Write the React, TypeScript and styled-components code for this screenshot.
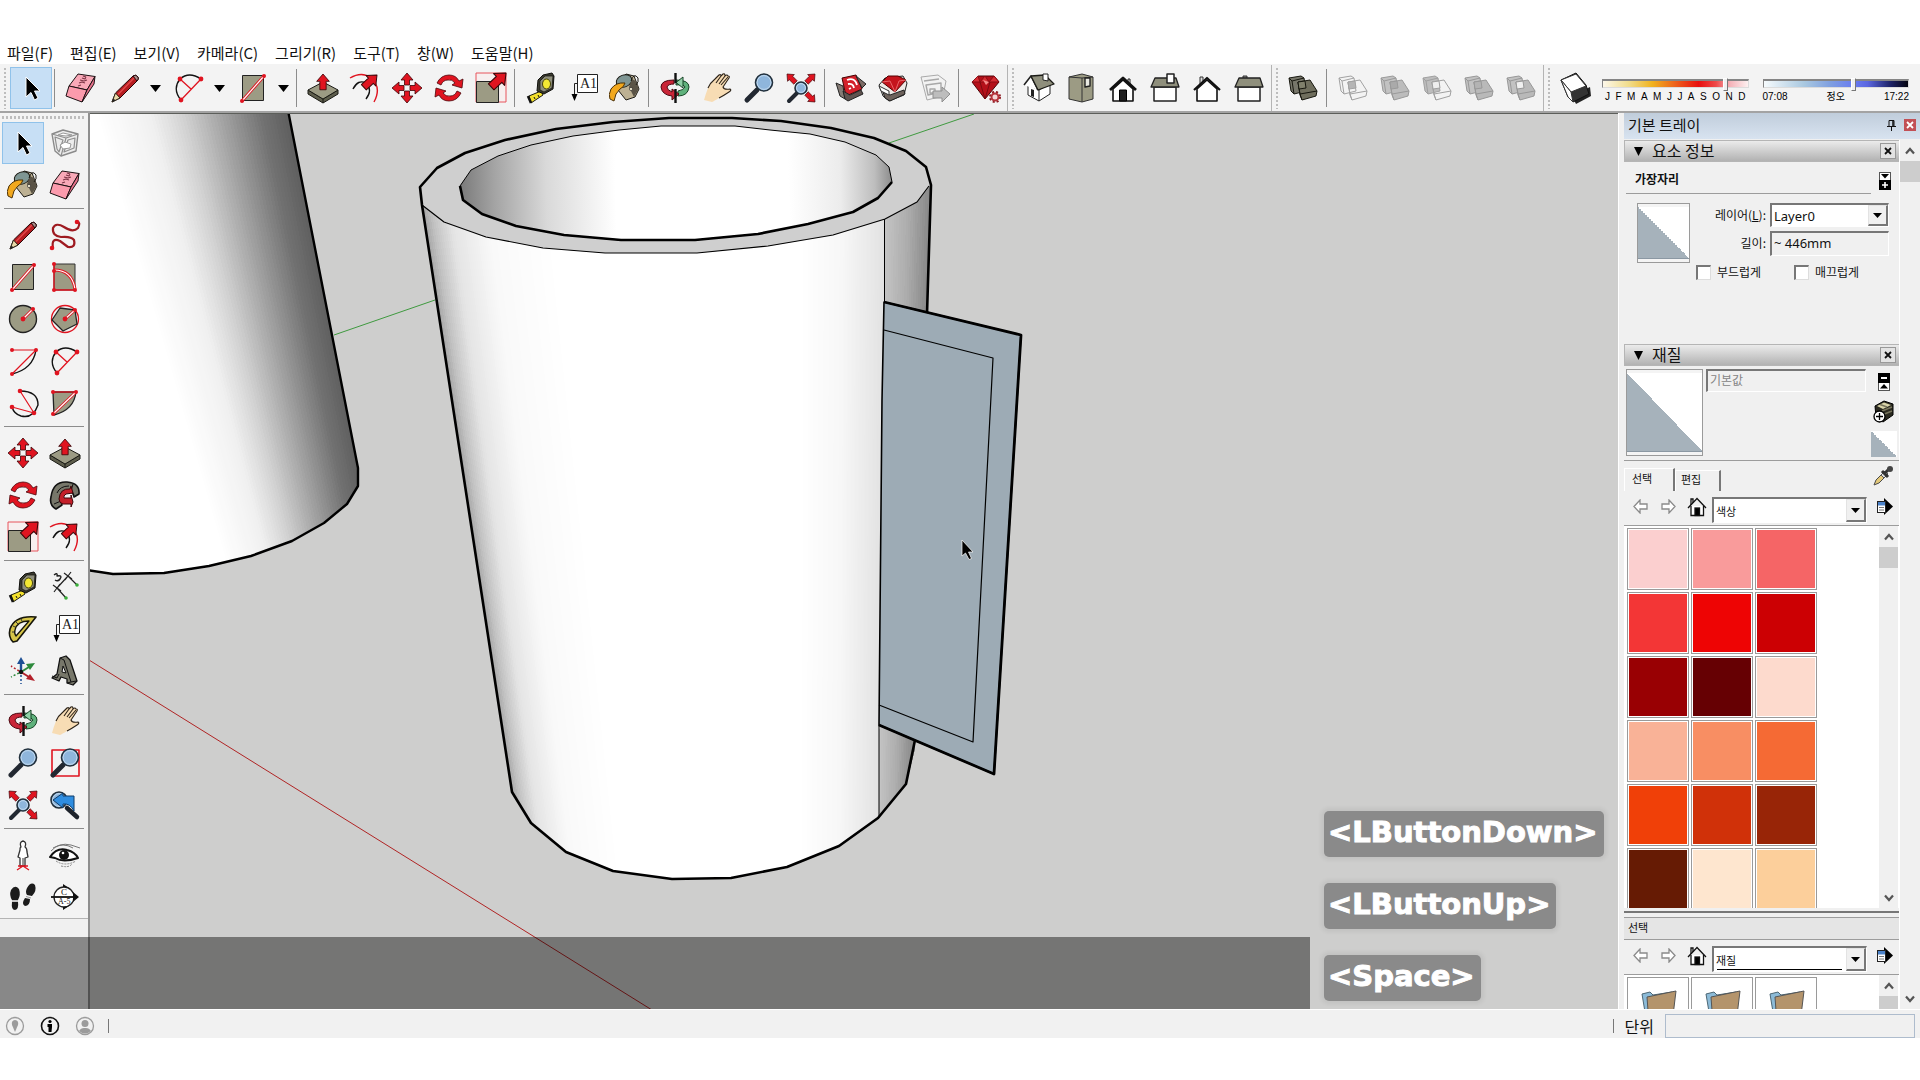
import React from 'react';
import styled, { createGlobalStyle } from 'styled-components';

const RED = '#e01420';
const TAUPE = '#9c9b84';
const KR = '"Noto Sans CJK KR", "Noto Sans", sans-serif';

const GlobalStyle = createGlobalStyle`
  * { box-sizing: border-box; }
  body { margin: 0; background: #fff; color: #111; font-family: "Liberation Sans", ${KR}; }
  button, input, select { font: inherit; color: inherit; margin: 0; }
`;

/* ---------- layout ---------- */
const Page = styled.div`
  position: relative;
  display: flex;
  flex-direction: column;
  height: 100vh;
  padding: 42px 0;
  background: #fff;
`;
const MenuBar = styled.nav`
  display: flex;
  align-items: center;
  gap: 17px;
  height: 22px;
  padding-left: 7px;
`;
const MenuItem = styled.button`
  border: 0;
  padding: 0;
  background: none;
  font: 15px/22px ${KR};
  white-space: nowrap;
`;
const ToolBar = styled.div`
  display: flex;
  height: 49px;
  padding-top: 1px;
  background: #f3f3f3;
  border-bottom: 2px solid #a3a3a3;
`;
const ToolGroup = styled.div`
  display: flex;
  align-items: center;
  padding-right: 1px;
  border-right: 1px solid #b4b4b4;
  &:last-child { flex: 1; border-right: 0; }
`;
const Grip = styled.span`
  width: 2px;
  height: 41px;
  margin: 0 4px;
  background: repeating-linear-gradient(#bdbdbd 0 2px, transparent 2px 4px);
`;
const ToolButton = styled.button<{ $active?: boolean }>`
  display: flex;
  align-items: center;
  justify-content: center;
  flex: none;
  width: 42px;
  height: 42px;
  padding: 0;
  border: 1px solid ${p => (p.$active ? '#90c2ea' : 'transparent')};
  background: ${p => (p.$active ? '#c7dff5' : 'none')};
`;
const DropTool = styled.div`
  display: flex;
  padding: 0 2px;
`;
const DropButton = styled.button`
  width: 18px;
  padding: 0;
  border: 0;
  background: none;
  line-height: 0;
`;
const VSep = styled.span`
  width: 1px;
  height: 38px;
  margin: 0 5px 0 2px;
  background: #8c8c8c;
`;
const HSep = styled.span`
  grid-column: 1 / -1;
  height: 1px;
  margin: 2px 2px 5px;
  background: #8c8c8c;
`;
const Body = styled.div`
  display: flex;
  flex: 1;
  min-height: 0;
`;
const Side = styled.aside`
  flex: none;
  width: 90px;
  background: #f0f0f0;
  border-right: 2px solid #8f8f8f;
`;
const SideTools = styled.div`
  display: grid;
  grid-template-columns: 42px 42px;
  padding: 0 2px;
  background: #f3f3f3;
  border-bottom: 1px solid #b4b4b4;
`;
const SideGrip = styled.span`
  grid-column: 1 / -1;
  height: 3px;
  margin: 3px 0;
  background: repeating-linear-gradient(90deg, #bdbdbd 0 2px, transparent 2px 4px);
`;
const Viewport = styled.main`
  position: relative;
  flex: 1;
  min-width: 0;
  border-top: 1px solid #5c5e5a;
  background: #cececd;
  overflow: hidden;
`;
const Scene = styled.svg`
  display: block;
  width: 100%;
  height: 100%;
`;
const KeyList = styled.div`
  position: absolute;
  right: 14px;
  bottom: 8px;
  width: 280px;
  display: flex;
  flex-direction: column;
  align-items: flex-start;
  gap: 26px;
`;
const Key = styled.kbd`
  padding: 0 6px 4px 4px;
  border-radius: 5px;
  background: #8a8a8a;
  box-shadow: 0 0 4px 3px rgba(0, 0, 0, 0.06);
  color: #fff;
  font: 700 29px/42px "DejaVu Sans", sans-serif;
  -webkit-text-stroke: 1px #fff;
`;
const Shade = styled.div`
  position: absolute;
  left: 0;
  right: 610px;
  bottom: 71px;
  height: 72px;
  background: rgba(0, 0, 0, 0.43);
`;

/* ---------- sun sliders ---------- */
const Sun = styled.div`
  display: flex;
  flex: 1;
  gap: 14px;
  padding: 0 10px 0 6px;
`;
const SunField = styled.label`
  flex: 1;
  display: flex;
  flex-direction: column;
  gap: 1px;
  padding-top: 3px;
`;
const Range = styled.input<{ $track: string }>`
  appearance: none;
  width: 100%;
  height: 13px;
  background: none;
  &::-webkit-slider-runnable-track {
    height: 9px;
    border: 1px solid #dcdcdc;
    border-top: 2px solid #858585;
    border-left-color: #858585;
    background: linear-gradient(90deg, ${p => p.$track});
  }
  &::-webkit-slider-thumb {
    appearance: none;
    width: 5px;
    height: 13px;
    margin-top: -3px;
    border: 1px solid #fff;
    border-right-color: #777;
    border-bottom-color: #777;
    background: #f0f0f0;
  }
`;
const Ticks = styled.span<{ $inset: number }>`
  display: flex;
  justify-content: space-between;
  padding: 0 ${p => p.$inset}px;
  font: 10px/12px "Liberation Sans", ${KR};
  color: #000;
`;

/* ---------- tray ---------- */
const Tray = styled.aside`
  flex: none;
  display: flex;
  flex-direction: column;
  width: 302px;
  padding-left: 5px;
  background: #f0f0f0;
  border-left: 1px solid #fff;
  font: 12px/16px ${KR};
`;
const TrayTitle = styled.header`
  display: flex;
  align-items: center;
  height: 26px;
  padding: 0 4px 2px;
  background: linear-gradient(#c0cddb, #d8e3f0);
  font-size: 15px;
  h2 { flex: 1; margin: 0; font: inherit; }
`;
const TitleButton = styled.button<{ $close?: boolean }>`
  display: flex;
  align-items: center;
  justify-content: center;
  width: 12px;
  height: 12px;
  margin-left: 7px;
  padding: 0;
  border: 0;
  background: ${p => (p.$close ? '#c25055' : 'none')};
`;
const TrayBody = styled.div`
  display: flex;
  flex: 1;
  min-height: 0;
  padding-top: 1px;
`;
const Panels = styled.div`
  flex: 1;
  min-width: 0;
  display: flex;
  flex-direction: column;
  border-right: 1px solid #fff;
`;
const ScrollBar = styled.div<{ $wide?: boolean }>`
  flex: none;
  display: flex;
  flex-direction: column;
  width: ${p => (p.$wide ? 20 : 19)}px;
  background: #f0f0f0;
  overflow: hidden;
`;
const ScrollButton = styled.button`
  flex: none;
  height: 21px;
  padding: 0;
  border: 0;
  background: none;
  line-height: 0;
  &:last-child { margin-top: auto; }
`;
const Thumb = styled.div`
  flex: none;
  height: 21px;
  background: #cdcdcd;
`;
const PanelHead = styled.header`
  flex: none;
  display: flex;
  align-items: center;
  gap: 9px;
  height: 22px;
  padding: 0 3px 0 9px;
  border: 1px solid #b5b5b5;
  border-width: 1px 0 1px 1px;
  background: linear-gradient(#ebebeb, #b2b2b2);
  font-size: 16px;
  line-height: 20px;
  h3 { flex: 1; margin: 0; padding-bottom: 2px; font: inherit; }
`;
const HeadClose = styled.button`
  display: flex;
  align-items: center;
  justify-content: center;
  width: 16px;
  height: 16px;
  padding: 0;
  border: 1px solid #999;
  background: #e3e3e3;
`;
const EntityInfo = styled.section`
  flex: none;
  height: 182px;
  padding: 7px 8px 0 2px;
`;
const EntityHead = styled.div`
  display: flex;
  justify-content: space-between;
  height: 24px;
  padding-left: 9px;
  font-weight: 700;
  line-height: 20px;
`;
const Rule = styled.hr<{ $right?: number }>`
  flex: none;
  width: auto;
  height: 1px;
  margin: 0 ${p => p.$right || 0}px 0 0;
  border: 0;
  background: #9c9c9c;
`;
const PlainButton = styled.button`
  display: block;
  padding: 0;
  border: 0;
  background: none;
  line-height: 0;
`;
const EntityGrid = styled.div`
  display: grid;
  grid-template-columns: 53px 80px 1fr;
  grid-template-rows: 24px 25px;
  row-gap: 4px;
  padding: 9px 2px 0 11px;
  > label { text-align: right; padding-right: 4px; line-height: 24px; }
`;
const Swatch = styled.div<{ $w: number; $h: number }>`
  grid-row: span 3;
  width: ${p => p.$w}px;
  height: ${p => p.$h}px;
  padding: 3px 0 4px;
  border: 1px solid #9a9a9a;
  background: #f4f4f4;
  &::before {
    content: '';
    display: block;
    height: 100%;
    background: linear-gradient(to top right, #a6b2bb 50%, #fff 50%);
    border-bottom: 1px solid #8b98a3;
  }
`;
const SelectBox = styled.div<{ $h: number }>`
  position: relative;
  height: ${p => p.$h}px;
  min-width: 0;
  border: 1px solid #fff;
  border-top: 2px solid #777;
  border-left: 2px solid #777;
  background: #fff;
  select {
    appearance: none;
    width: 100%;
    height: 100%;
    padding: 0 22px 0 2px;
    border: 0;
    background: none;
    outline: 0;
  }
`;
const SelectArrow = styled.span`
  position: absolute;
  right: 0;
  top: 0;
  bottom: 0;
  width: 20px;
  display: flex;
  align-items: center;
  justify-content: center;
  border: 1px solid #e3e3e3;
  border-right: 2px solid #777;
  border-bottom: 2px solid #777;
  background: #f0f0f0;
  pointer-events: none;
`;
const Underline = styled.span`
  position: absolute;
  left: 3px;
  right: 24px;
  bottom: 1px;
  height: 1px;
  background: #000;
`;
const LayerSelect = styled.div`
  min-width: 0;
  font: 13px/16px "Noto Sans", ${KR};
`;
const ReadOnly = styled.input<{ $dim?: boolean }>`
  width: 100%;
  min-width: 0;
  height: ${p => (p.$dim ? 23 : 25)}px;
  padding: 0 2px 2px;
  border: 1px solid #fff;
  border-top: 2px solid #777;
  border-left: 2px solid #777;
  background: #f0f0f0;
  color: ${p => (p.$dim ? '#858585' : '#111')};
  font: ${p => (p.$dim ? 12 : 13)}px/16px "Noto Sans", ${KR};
`;
const Checks = styled.div`
  display: flex;
  gap: 34px;
  padding: 1px 0 0 70px;
`;
const Check = styled.label`
  display: flex;
  align-items: center;
  gap: 6px;
  width: 64px;
  height: 16px;
  white-space: nowrap;
  input {
    appearance: none;
    flex: none;
    width: 15px;
    height: 15px;
    border: 1px solid #ddd;
    border-top: 2px solid #777;
    border-left: 2px solid #777;
    background: #fff;
  }
`;
const Material = styled.section`
  flex: none;
  display: flex;
  gap: 3px;
  height: 94px;
  padding: 3px 1px 0 2px;
`;
const MaterialName = styled.div`
  flex: 1;
  min-width: 0;
`;
const MaterialTools = styled.div`
  display: flex;
  flex-direction: column;
  align-items: center;
  justify-content: space-between;
  width: 29px;
  padding: 4px 0 3px;
`;
const MiniSwatch = styled.span`
  width: 26px;
  height: 26px;
  background: linear-gradient(to top right, #a6b2bb 50%, #fff 50%);
`;
const TabRow = styled.div`
  flex: none;
  display: flex;
  align-items: flex-end;
  height: 30px;
  padding-right: 5px;
`;
const Tab = styled.button<{ $on?: boolean }>`
  width: ${p => (p.$on ? 51 : 46)}px;
  height: ${p => (p.$on ? 23 : 21)}px;
  padding: 0 0 4px ${p => (p.$on ? 7 : 5)}px;
  border: 0;
  border-top: 1px solid #fff;
  border-left: 1px solid #fff;
  border-right: 2px solid #777;
  background: #f0f0f0;
  font-size: 11px;
  text-align: left;
`;
const TabTool = styled.div`
  margin: 0 0 4px auto;
`;
const NavRow = styled.div`
  flex: none;
  display: grid;
  grid-template-columns: 28px 28px 29px 1fr 27px;
  align-items: start;
  padding: 6px 5px 2px 2px;
  font-size: 11px;
  > div { margin-left: 1px; }
  > button { justify-self: center; display: flex; align-items: center; height: 19px; }
  > button:last-child { justify-self: end; }
`;
const List = styled.div<{ $grow?: boolean }>`
  flex: ${p => (p.$grow ? '1 1 0' : '0 0 34px')};
  display: flex;
  min-height: 0;
  padding-right: 1px;
  overflow: hidden;
  background: #fff;
`;
const Cells = styled.div`
  flex: 1;
  display: grid;
  grid-template-columns: repeat(3, 62px);
  grid-auto-rows: 62px;
  align-content: start;
  gap: 2px;
  padding: 2px 3px;
`;
const Colour = styled.button<{ $c: string }>`
  padding: 1px;
  border: 1px solid #9a9a9a;
  background: ${p => p.$c} content-box;
`;
const FolderCell = styled.button`
  display: flex;
  align-items: flex-start;
  padding: 12px 0 0 13px;
  border: 1px solid #9a9a9a;
  background: #fff;
`;
const SecondHead = styled.h4`
  flex: none;
  height: 32px;
  margin: 0;
  padding: 3px 0 0;
  border-bottom: 1px solid #9c9c9c;
  span {
    display: block;
    height: 28px;
    padding: 3px 4px 0;
    border-top: 2px solid #777;
    background: linear-gradient(#f0f0f0 0 4px, #9c9c9c 4px 5px, #e5e5e5 5px);
    font: 11px/22px ${KR};
  }
`;

/* ---------- status bar ---------- */
const Status = styled.footer`
  flex: none;
  display: flex;
  align-items: center;
  gap: 15px;
  height: 29px;
  padding: 3px 5px 0;
  border-top: 1px solid #fff;
  background: #f1f1f1;
`;
const StatusTick = styled.span`
  width: 1px;
  height: 14px;
  margin-left: -2px;
  background: #777;
`;
const Measure = styled.label`
  display: flex;
  align-items: center;
  gap: 11px;
  margin-left: auto;
  font: 16px/24px ${KR};
  input {
    width: 250px;
    height: 24px;
    border: 1px solid #aebccd;
    background: #f0f0f0;
  }
`;

/* ---------- icon primitives ---------- */
const Ico = ({ children, s = 32 }: { children: React.ReactNode; s?: number }) => (
  <svg width={s} height={s} viewBox="0 0 32 32" fill="none" strokeLinejoin="round">{children}</svg>
);
const Dot = ({ x, y, r = 2 }: { x: number; y: number; r?: number }) => <circle cx={x} cy={y} r={r} fill={RED} />;
const Arrow = ({ x, y, a, k = 1 }: { x: number; y: number; a: number; k?: number }) => (
  <path transform={`translate(${x} ${y}) rotate(${a}) scale(${k})`} d="M0 0L6 7H3V15H-3V7H-6Z" fill={RED} stroke="#3a0508" strokeWidth={0.8} />
);
const RedLine = ({ d }: { d: string }) => (
  <>
    <path d={d} stroke={RED} strokeWidth={3} />
    <path d={d} stroke="#fff" strokeWidth={1.2} />
  </>
);
const Lens = ({ x, y, r }: { x: number; y: number; r: number }) => (
  <>
    <circle cx={x} cy={y} r={r} fill="#8fb6dc" stroke="#22303c" strokeWidth={1.6} />
    <circle cx={x} cy={y} r={r - 1.6} stroke="#c7dcef" strokeWidth={0.9} />
  </>
);

const BoxPair = ({ front, back, line, cut }: { front: string; back: string; line: string; cut: string }) => (
  <Ico>
    <path d="M2 6L14 4L17 6L19 19L7 22L4 19Z" fill={back} stroke={line} />
    <path d="M2 6L5 9L17 6M5 9L7 22" stroke={line} />
    <path d="M11 10L23 8L30 19L29 24L15 28L13 23Z" fill={front} stroke={line} />
    <path d="M13 22L30 19M11 10L13 22L15 28" stroke={line} />
    <path d="M11 10L18 9L19 16L12 17Z" fill={cut} stroke={line} />
  </Ico>
);

const icons: Record<string, React.ReactNode> = {
  cursor: <Ico><path d="M11 5V25L16 20.500L19.500 28L23 26L19.500 19H25Z" fill="#000" stroke="#fff" /></Ico>,
  eraser: (
    <Ico>
      <path d="M13 2L30 4.500L22 18L4 14Z" fill="#f9a9b8" stroke="#1c1113" />
      <path d="M4 14L22 18L17 30L1 24Z" fill="#fb9bad" stroke="#1c1113" />
      <path d="M22 18L30 4.500L29 12L17 30Z" fill="#e6728b" stroke="#1c1113" />
      <path d="M18 4l3 1M17 6l3 1l1-2M15 8l4 1l3-1M14 11l3-1l3 1M13 14l3-1" stroke="#7c3546" strokeWidth={1.1} />
    </Ico>
  ),
  pencil: (
    <Ico>
      <path d="M3 30L6.500 21L24 4Q27 2 29 5Q30 7 28 9L11 26Z" fill="#b51c20" stroke="#250708" />
      <path d="M3 30L6.500 21L11 26Z" fill="#e8d9a8" stroke="#30281a" />
      <path d="M3 30L4.500 26.500L6.500 28.500Z" fill="#222" />
      <path d="M9 22.500L25 6" stroke="#e4494b" strokeWidth={1.4} />
      <path d="M24 4Q27 2 29 5Q30 7 28 9Z" fill="#a98f8c" stroke="#250708" />
    </Ico>
  ),
  arc2: (
    <Ico>
      <path d="M7 7Q16 -1 28 7M7 7Q-1 17 8 28" stroke="#111" strokeWidth={1.3} />
      <path d="M8 28L28 7M7 7L18 17" stroke={RED} strokeWidth={1.3} />
      <Dot x={7} y={7} r={2.4} /><Dot x={28} y={7} r={2.4} /><Dot x={8} y={28} r={2.4} />
    </Ico>
  ),
  rect: (
    <Ico>
      <path d="M5.500 3.500H26.500V28.500H5.500Z" fill={TAUPE} stroke="#222" />
      <RedLine d="M5 29L27 4" /><Dot x={5} y={29} /><Dot x={27} y={4} />
    </Ico>
  ),
  push: (
    <Ico>
      <path d="M1 18V22L16 31L31 22V18L16 27Z" fill="#5d5d4c" stroke="#1a1a14" />
      <path d="M1 18L16 10L31 18L16 27Z" fill={TAUPE} stroke="#1a1a14" />
      <path d="M16 27V31" stroke="#1a1a14" />
      <Arrow x={16} y={2} a={0} k={1.05} />
    </Ico>
  ),
  offset: (
    <Ico>
      <path d="M1 6Q13 -1 22 6Q33 15 25 30" stroke={RED} strokeWidth={1.4} />
      <path d="M4 17Q9 7 17 11Q24 18 17 27" stroke="#111" strokeWidth={1.4} />
      <Arrow x={28} y={3} a={47} k={1.2} />
    </Ico>
  ),
  move: (
    <Ico>
      {[0, 90, 180, 270].map(a => (
        <path key={a} transform={`rotate(${a} 16 16)`} d="M16 1L22 8H18.500V13H13.500V8H10Z" fill={RED} stroke="#3a0508" strokeWidth={0.8} />
      ))}
    </Ico>
  ),
  rotate: (
    <Ico>
      {[0, 180].map(a => (
        <path key={a} transform={`rotate(${a} 16 16)`} d="M4 11Q8 3 16 3Q23 3 26 9L30 7L29 16L19 13L22 11Q19 7 15 8Q10 8 8 13Z" fill={RED} stroke="#4a060a" strokeWidth={0.8} />
      ))}
    </Ico>
  ),
  scale: (
    <Ico>
      <path d="M1 1H31V30H1Z" stroke="#e8545c" fill="#f7efef" />
      <path d="M1.500 9.500H23.500V30.500H1.500Z" fill={TAUPE} stroke="#222" />
      <Arrow x={31} y={1} a={47} k={1.35} />
    </Ico>
  ),
  tape: (
    <Ico>
      <path d="M4 24L16 19L18 23L6 31Z" fill="#f3e02c" stroke="#1a1a10" />
      <path d="M3 24L6 31" stroke="#111" strokeWidth={2.6} />
      <path d="M13 8L18 3L27 1L29 4L28 17L19 22L12 19Z" fill="#3b3b30" stroke="#0f0f0b" />
      <path d="M15 9L20 4L28 4L27 16L19 20L15 18Z" fill="#8f8f7d" stroke="#0f0f0b" strokeWidth={0.7} />
      <ellipse cx={21.500} cy={12} rx={4} ry={5} fill="#f3e833" stroke="#46430c" />
      <path d="M9 25l1 2M13 23l1 2" stroke="#111" />
    </Ico>
  ),
  label: (
    <Ico>
      <path d="M10.500 2.500H30.500V20.500H10.500Z" fill="#fff" stroke="#222" />
      <path d="M10 11.500H7.500V24" stroke="#222" />
      <path d="M4.500 22H10.500L7.500 29Z" fill="#000" />
      <text x={13} y={16} fontFamily="Liberation Serif, serif" fontSize={14} fill="#222">A1</text>
    </Ico>
  ),
  bucket: (
    <Ico>
      <path d="M10 9L17 2L25 4L30 17L26 25L17 28L9 18Z" fill="#bdb193" stroke="#1c1a14" />
      <ellipse cx={15} cy={9} rx={8} ry={6} transform="rotate(-20 15 9)" fill="#7f9694" stroke="#1c1a14" />
      <path d="M23 7Q31 10 29 18L25 25L20 15Z" fill="#5a5346" />
      <path d="M22 9Q25 0 29 6Q30 10 27 13" stroke="#1c1a14" />
      <path d="M16 11Q7 10 2 17Q-1 23 1 27L5 29Q6 21 11 17Q15 15 16 11Z" fill="#f2a81d" stroke="#4d3207" />
      <circle cx={22} cy={17} r={1.600} fill="#f2ead2" stroke="#222" strokeWidth={0.6} />
    </Ico>
  ),
  orbit: (
    <Ico>
      <path d="M17 8Q30 8 30 15Q29 24 19 24V19Q25 18 26 15Q25 12 17 13Z" fill="#5fb27c" stroke="#174526" />
      <path d="M15 8Q2 8 2 15Q3 23 13 24V28L20 22L13 17V20Q8 18 8 15Q9 12 15 12Z" fill="#c92638" stroke="#4c0710" />
      <path d="M24 5L17 10.500L24 16Z" fill="#8fd0a6" stroke="#174526" />
      <path d="M16.500 1V11M16.500 17V31" stroke="#111" strokeWidth={2.400} />
    </Ico>
  ),
  hand: (
    <Ico>
      <path d="M3 28Q5 21 7 16Q9 11 14 7L18 3Q20 2 20 4L22 2Q24 1 24 4Q26 2 27 4Q29 4 28 6L22 15Q23 18 29 17Q31 18 28 20Q22 24 18 26Q13 29 11 30Z" fill="#f7dcb4" />
      <path d="M7 16Q9 11 14 7L18 3Q20 2 20 4L22 2Q24 1 24 4Q26 2 27 4Q29 4 28 6L22 15Q23 18 29 17Q31 18 28 20Q22 24 18 26M20 4L15 11M24 4L18 12M27 5L20 13" stroke="#2c2319" strokeWidth={1.1} />
    </Ico>
  ),
  zoom: <Ico><path d="M4 28L14 18" stroke="#222831" strokeWidth={5} strokeLinecap="round" /><Lens x={21} y={10.500} r={8.500} /></Ico>,
  zoomWin: <Ico><path d="M3 3H30V29H3Z" stroke={RED} strokeWidth={1.600} /><path d="M4 28L14 18" stroke="#222831" strokeWidth={5} strokeLinecap="round" /><Lens x={21} y={10.500} r={8.500} /></Ico>,
  extents: (
    <Ico>
      <path d="M4 29L12 21" stroke="#222831" strokeWidth={4} strokeLinecap="round" />
      <Arrow x={2} y={2} a={-45} k={0.8} /><Arrow x={30} y={2} a={45} k={0.8} /><Arrow x={30} y={30} a={135} k={0.8} />
      <Lens x={16} y={16} r={6} />
    </Ico>
  ),
  previous: (
    <Ico>
      <Lens x={10} y={11} r={8} />
      <path d="M18 19L28 28" stroke="#1d232b" strokeWidth={4.500} strokeLinecap="round" />
      <path d="M4 11L14 4V7H25V22Q21 14 14 15V19Z" fill="#2f8de0" stroke="#103c68" />
    </Ico>
  ),
  warehouse: (
    <Ico>
      <path d="M1 11L8 14L10 27L5 24Z" fill="#857b75" stroke="#222" />
      <path d="M7 6L21 3L27 17L11 24Z" fill="#d3202a" stroke="#400" />
      <path d="M12 8Q20 5 22 13M13 12Q18 11 19 16M14 17l2-1" stroke="#fff" strokeWidth={1.800} />
      <path d="M21 4L26 8L31 12L27 16Z" fill="#7c6a64" stroke="#222" />
      <path d="M8 19L15 23L26 18L28 22L13 29L10 27Z" fill="#5f534f" stroke="#222" />
    </Ico>
  ),
  extWarehouse: (
    <Ico>
      <path d="M2 13L8 6L26 4L30 11L27 23L12 29L6 24Z" fill="#eeeae7" stroke="#222" />
      <path d="M5 10L11 4H21L29 8L18 20Z" fill="#c5141d" stroke="#500" />
      <path d="M5 10L13 9L18 20L22 9L29 8" stroke="#e86468" />
      <path d="M6 20L13 23L27 18L28 22L13 29L8 26Z" fill="#6d625c" stroke="#222" />
      <path d="M2 14L12 19V23L4 19Z" fill="#fff" stroke="#333" />
    </Ico>
  ),
  layout: (
    <Ico>
      <path d="M2 5L19 3L27 9L24 24L8 28Z" fill="#f2f2f2" stroke="#aaa" />
      <path d="M5 9L20 7M7 13L22 11V20L9 23Z M11 17h5v4h-5z" stroke="#a8a8a8" strokeWidth={1.400} />
      <path d="M14 19H23V15L31 22L23 30V26H14Z" fill="#bdbdbd" stroke="#8f8f8f" />
    </Ico>
  ),
  ruby: (
    <Ico>
      <path d="M3 10L9 4H25L30 10L16 27Z" fill="#b5101a" stroke="#4d0509" />
      <path d="M3 10H30L25 4L20 10L16 4L11 10L9 4" fill="#d62d34" stroke="#8b0b12" />
      <path d="M14 8L20 10L17 13Z" fill="#f58c8c" />
      <path d="M11 10L16 27L21 10" stroke="#7b0a10" />
      <circle cx={26} cy={25} r={5} stroke="#8f1a21" strokeWidth={2} strokeDasharray="2 2" />
      <circle cx={26} cy={25} r={3.500} stroke="#b5333b" strokeWidth={2} fill="#f3d6d6" />
    </Ico>
  ),
  iso: (
    <Ico>
      <path d="M5 13L5 23L16 29L27 22L27 12L16 18Z" fill="#fff" stroke="#222" />
      <path d="M16 18V29" stroke="#222" /><path d="M1 13L8 4L15 18" stroke="#222" strokeWidth={1.600} fill="#fff" />
      <path d="M8 4L22 3L31 12L15 18Z" fill="#8f8f7c" stroke="#1b1b16" strokeWidth={1.300} />
      <path d="M20 2H25V9L20 8Z" fill="#fff" stroke="#222" /><path d="M8 17L11 18V25L8 24Z" fill="#222" />
    </Ico>
  ),
  top: (
    <Ico>
      <path d="M4 5L17 2L28 5V27L17 30L4 27Z" fill={TAUPE} stroke="#333" /><path d="M17 6V30M4 5L17 6L28 5" stroke="#333" />
      <path d="M20 6H25V14L20 15Z" fill="#e9e9e2" stroke="#222" strokeWidth={1.400} />
    </Ico>
  ),
  front: <Ico><path d="M6 17V29H26V17L16 8Z" fill="#fff" stroke="#111" strokeWidth={1.600} /><path d="M21 11V7H23V12" stroke="#222" /><path d="M3 18L16 6L29 18" stroke="#111" strokeWidth={2.800} /><path d="M12.500 18H19.500V29H12.500Z" fill="#222" stroke="#000" /></Ico>,
  right: <Ico><path d="M5 15H27V29H5Z" fill="#fff" stroke="#222" strokeWidth={1.500} /><path d="M6 6H27L30 15H2Z" fill="#8f8f7c" stroke="#222" strokeWidth={1.300} /><path d="M18 2H25V11H18Z" fill="#fff" stroke="#222" strokeWidth={1.500} /></Ico>,
  back: <Ico><path d="M6 17V29H26V17L16 8Z" fill="#fff" stroke="#111" strokeWidth={1.600} /><path d="M9 12V5H12V9" stroke="#333" fill="#ddd" /><path d="M3 18L16 6L29 18" stroke="#111" strokeWidth={2.200} /></Ico>,
  left: <Ico><path d="M5 15H27V29H5Z" fill="#fff" stroke="#222" strokeWidth={1.500} /><path d="M10 6V4H14V6" stroke="#333" fill="#888" /><path d="M6 6H27L30 15H2Z" fill="#8f8f7c" stroke="#222" strokeWidth={1.300} /></Ico>,
  shell: <BoxPair front="#6f6e5d" back="#77766a" line="#17170f" cut="#80806c" />,
  intersect: <BoxPair front="none" back="none" line="#a2a2a2" cut="#b5b5b5" />,
  union: <BoxPair front="#bcbcbc" back="#c2c2c2" line="#9a9a9a" cut="#aaa" />,
  subtract: <BoxPair front="none" back="#bdbdbd" line="#a0a0a0" cut="#eee" />,
  trim: <BoxPair front="#b9b9b9" back="#c2c2c2" line="#989898" cut="#b3b3b3" />,
  split: <BoxPair front="#b9b9b9" back="#c2c2c2" line="#989898" cut="#f0f0f0" />,
  shadow: <Ico><path d="M13 24L31 15L32 24L17 32Z" fill="#222" /><path d="M2 8L17 1L27 13L30 22L14 30L9 25Z" fill="#333" stroke="#111" /><path d="M2 8L17 2L27 14L12 20Z" fill="#fff" stroke="#333" /><path d="M2 8L9 25L14 30L12 20Z" fill="#fff" stroke="#333" /></Ico>,
  component: (
    <Ico>
      <path d="M3 7L14 3L29 7L27 24L12 29L6 24Z" fill="#ececec" stroke="#8a8a8a" strokeWidth={1.400} />
      <path d="M3 7L17 11L29 7M17 11L12 29M6 10L14 13L10 25L8 22Z M19 13L26 11L25 21L15 25Z" stroke="#8f8f8f" strokeWidth={1.200} />
      <path d="M9 8L14 6L23 8L17 9ZM11 18L16 15L22 17L21 21L14 22Z" stroke="#999" fill="#fff" />
    </Ico>
  ),
  freehand: <Ico><path d="M4 29Q2 18 11 22L19 28Q27 29 25 21Q22 17 12 18Q3 17 4 9Q7 3 15 8Q24 14 29 9Q32 3 28 3" stroke="#9e1a20" strokeWidth={2.200} /><Dot x={3} y={29} r={2.300} /><Dot x={28} y={3} r={2.300} /></Ico>,
  rotRect: <Ico><path d="M5 3H26V29H5Z" fill={TAUPE} stroke="#333" /><RedLine d="M5 9Q23 9 26 28" /><path d="M5 3V29H26" stroke={RED} strokeWidth={1.400} /><Dot x={5} y={3} /><Dot x={5} y={10} /><Dot x={5} y={29} /><Dot x={26} y={29} /></Ico>,
  circle: <Ico><circle cx={16} cy={16} r={13.500} fill={TAUPE} stroke="#222" strokeWidth={1.400} /><RedLine d="M16 16L26 6" /><Dot x={16} y={16} r={2.400} /><Dot x={26} y={6} /></Ico>,
  polygon: <Ico><circle cx={16} cy={16} r={13.500} stroke={RED} strokeWidth={1.300} /><path d="M26 7L28 21L14 28L3 17L11 5Z" fill={TAUPE} stroke="#222" strokeWidth={1.300} /><RedLine d="M16 16L26 7" /><Dot x={16} y={16} r={2.400} /><Dot x={26} y={7} /></Ico>,
  arc1: <Ico><path d="M29 5Q26 24 5 29" stroke="#111" strokeWidth={1.400} /><path d="M5 5H29L5 29" stroke={RED} strokeWidth={1.200} /><Dot x={5} y={5} /><Dot x={29} y={5} /><Dot x={5} y={29} /></Ico>,
  arc3: <Ico><path d="M13 4Q31 4 31 18Q26 32 14 29Q7 27 5 20" stroke="#111" strokeWidth={1.400} /><path d="M13 4L27 26L5 20" stroke={RED} strokeWidth={1.200} /><Dot x={13} y={4} r={2.300} /><Dot x={27} y={26} r={2.300} /><Dot x={5} y={20} r={2.300} /></Ico>,
  pie: <Ico><path d="M4 5H27Q25 23 5 28Z" fill={TAUPE} stroke="#222" strokeWidth={1.300} /><path d="M4 5H27" stroke={RED} strokeWidth={1.300} /><RedLine d="M4 27L27 5" /><Dot x={4} y={5} /><Dot x={27} y={5} /><Dot x={4} y={27} /></Ico>,
  follow: <Ico><path d="M2 18Q4 2 18 3Q31 4 30 15L25 18Q24 11 17 12Q10 16 13 26L7 30Q0 26 2 18Z" fill="#77776a" stroke="#111" strokeWidth={1.600} /><path d="M8 14Q11 7 20 7M5 25L12 22M24 5L22 12" stroke="#111" /><path d="M10 20Q11 9 21 10L22 7L24 14L17 15Q14 17 15 19H22V16L24 23L22 28V25H14Q10 24 10 20Z" fill="#c41f29" stroke="#3e070a" /></Ico>,
  dimension: (
    <Ico>
      <path d="M8 17L19 5M8 17L17 27M19 5L28 14M4 14L12 20M5 21L11 13M15 2L23 8M16 9L22 1" stroke="#222" strokeWidth={1.200} />
      <path d="M5 4Q9 1 8 5Q14 4 11 8Q9 11 6 9" stroke="#222" strokeWidth={1.400} />
      <circle cx={17} cy={27} r={1.800} fill="#3aae3a" /><circle cx={28} cy={14} r={1.800} fill="#3aae3a" />
    </Ico>
  ),
  protractor: <Ico><path d="M29 4Q8 2 3 16Q1 24 6 29L10 28Z" fill="#d6c548" stroke="#16150a" strokeWidth={1.600} /><path d="M22 8Q10 8 8 17Q7 21 9 23Z" fill="#f3f3f3" stroke="#16150a" strokeWidth={1.300} /><path d="M6 13l2 1M9 9l2 2M14 6l1 2M5 19h2" stroke="#333" /></Ico>,
  axes: (
    <Ico>
      <path d="M14 18V8" stroke="#1d4f95" strokeWidth={2.400} /><path d="M10 9L14 2L18 9Z" fill="#1d4f95" />
      <path d="M14 17L22 12" stroke="#2d8a3c" strokeWidth={2} /><path d="M19 9L28 8L23 15Z" fill="#2d8a3c" />
      <path d="M14 17L22 22" stroke="#b3202a" strokeWidth={2} /><path d="M19 24L23 19L28 26Z" fill="#b3202a" />
      <path d="M14 20V29" stroke="#1d4f95" strokeDasharray="2 2" strokeWidth={1.500} /><path d="M12 18L4 22" stroke="#2d8a3c" strokeDasharray="2 2" strokeWidth={1.500} /><path d="M12 16L4 11" stroke="#b3202a" strokeDasharray="2 2" strokeWidth={1.500} />
      <circle cx={14} cy={17} r={2.200} fill="#111" />
    </Ico>
  ),
  text3d: <Ico><path d="M11 3L17 1L21 5L28 26L24 30L18 28V24L12 22L10 26L3 23L8 19Z" fill="#77776a" stroke="#111" strokeWidth={1.300} /><path d="M13 17L14 11L17 18Z" fill="#f3f3f3" stroke="#111" /><path d="M11 3L15 5L22 27L27 26M22 27L18 28M3 21L8 23L10 19" stroke="#111" /></Ico>,
  position: <Ico><path d="M13 11Q13 8 14 8Q12 3 16 2Q20 3 18 8Q20 9 20 13L21 18L18 19V27H13V19L11 18Z" fill="#fff" stroke="#333" strokeWidth={1.300} /><path d="M16 19V26" stroke="#333" /><path d="M10 31L16 27L22 31M11 27H21" stroke={RED} strokeWidth={1.300} /></Ico>,
  look: <Ico><path d="M2 12Q10 3 22 6L31 9M4 9Q14 3 24 9" stroke="#777" /><path d="M1 18Q8 8 18 11Q26 13 29 19Q14 24 6 19Z" fill="#fff" stroke="#111" strokeWidth={2} /><circle cx={15} cy={16} r={5} fill="#111" /><circle cx={14} cy={14} r={1.300} fill="#fff" /><path d="M7 22Q16 28 27 22M12 27Q20 29 23 25" stroke="#888" strokeDasharray="2 1" /></Ico>,
  walk: <Ico><path d="M4 9Q8 3 12 8Q14 14 11 19L5 19Q2 14 4 9ZM5 21L11 21Q12 28 8 29Q4 29 5 21ZM20 7Q24 0 28 4Q30 10 25 15L20 14Q18 11 20 7ZM18 17L23 18Q23 25 18 25Q14 23 18 17Z" fill="#1c1c1c" /><path d="M5 20H11M19 15.500L24 17" stroke="#999" /></Ico>,
  section: <Ico><circle cx={15} cy={16} r={10} stroke="#222" strokeWidth={1.300} fill="#fff" /><path d="M2 16H27" stroke="#111" strokeWidth={1.800} /><path d="M24 11L30 16L24 21ZM14 3L23 9Q19 6 14 6ZM14 29L23 23Q19 26 14 26Z" fill="#111" /><text x={12} y={14} fontSize={9} fontFamily="Liberation Serif, serif" fill="#111">C</text><text x={9} y={23} fontSize={8} fontFamily="Liberation Serif, serif" fill="#111">A-5</text></Ico>,
};

const Tool = ({ name, label, active }: { name: string; label: string; active?: boolean }) => (
  <ToolButton $active={active} aria-label={label} aria-pressed={active}>{icons[name]}</ToolButton>
);
const Triangle = ({ w = 10, h = 6 }: { w?: number; h?: number }) => (
  <svg width={w} height={h} viewBox="0 0 10 6" preserveAspectRatio="none"><path d="M0 0H10L5 6Z" fill="#000" /></svg>
);
const WithMenu = ({ name, label }: { name: string; label: string }) => (
  <DropTool><Tool name={name} label={label} /><DropButton aria-label={`${label} 메뉴`}><Triangle w={11} h={7} /></DropButton></DropTool>
);
const Chevron = ({ down }: { down?: boolean }) => (
  <svg width={10} height={8} viewBox="0 0 10 8" fill="none"><path d={down ? 'M1 1.500L5 6L9 1.500' : 'M1 6.500L5 2L9 6.500'} stroke="#555" strokeWidth={2.200} /></svg>
);
const Cross = ({ c = '#111' }: { c?: string }) => (
  <svg width={8} height={8} viewBox="0 0 8 8"><path d="M1 1L7 7M7 1L1 7" stroke={c} strokeWidth={1.800} /></svg>
);

/* ---------- 3D scene ---------- */
type Stop = [number, number];
const grey = (stops: Stop[], t: number) => {
  const i = Math.max(1, stops.findIndex(s => s[0] >= t));
  const [a, b] = [stops[i - 1], stops[i]];
  const v = Math.round(a[1] + ((b[1] - a[1]) * (t - a[0])) / (b[0] - a[0]));
  return `rgb(${v},${v},${v})`;
};
/* Vertical facets that narrow from the top edge to the bottom edge. */
const Facets = ({ top, bottom, stops, n = 64 }: { top: number[]; bottom: number[]; stops: Stop[]; n?: number }) => (
  <g shapeRendering="crispEdges">
    {Array.from({ length: n }, (_, i) => {
      const at = (e: number[], t: number) => `${e[0] + (e[1] - e[0]) * t},${e[2]}`;
      return <polygon key={i} points={`${at(top, i / n)} ${at(top, 1)} ${at(bottom, 1)} ${at(bottom, i / n)}`} fill={grey(stops, (i + 0.5) / n)} />;
    })}
  </g>
);
const MUG = 'M420 187L422 205L512 792L531 823L566 852L613 871L672 879L731 878L787 867L839 846L878 818L906 784L915 748L927 306L931 185L928 186L917 202L885 219L833 235L768 246L697 253H605L543 248L486 237L444 222L422 205Z';
const LEFT_MUG = 'M80 100H286L358 468V486L347 504L324 523L292 541L251 556L209 566L164 573L113 574L80 569Z';
const INNER = 'M460 186L471 170L498 156L531 145L573 136L619 130L661 126H735L770 130L810 134L845 142L876 155L889 167L892 182L878 198L853 212L808 224L758 234L695 240H621L564 235L516 226L482 214L463 200Z';
const RIM = 'M420 187L437 168L465 153L505 140L556 129L613 122L669 118H732L781 121L831 128L874 138L906 151L926 167L931 185L917 202L885 219L833 235L768 246L697 253H605L543 248L486 237L444 222L422 205Z';

const Model = () => (
  <Scene role="img" aria-label="3D 모델">
    <defs>
      <clipPath id="mug"><path d={MUG} /></clipPath>
      <clipPath id="leftMug"><path d={LEFT_MUG} /></clipPath>
      <linearGradient id="inner" gradientUnits="userSpaceOnUse" x1="460" y1="190" x2="892" y2="180">
        <stop offset="0" stopColor="#7a7a7a" /><stop offset=".08" stopColor="#a4a4a4" /><stop offset=".2" stopColor="#d9d9d9" /><stop offset=".36" stopColor="#fff" />
        <stop offset=".76" stopColor="#fff" /><stop offset=".88" stopColor="#ececec" /><stop offset=".96" stopColor="#bdbdbd" /><stop offset="1" stopColor="#8c8c8c" />
      </linearGradient>
    </defs>
    <g transform="translate(-90 -114)" fill="none" stroke="#000" strokeLinejoin="round">
      <path d="M334 335L435 300M889 143L974 114" stroke="#3f9a3f" />
      <path d="M89 660L652 1010" stroke="#b02424" />
      <g clipPath="url(#leftMug)" stroke="none">
        <rect x="80" y="100" width="300" height="500" fill="#fff" />
        <Facets top={[95, 293, 114]} bottom={[228, 384, 575]} stops={[[0, 255], [0.28, 240], [0.45, 208], [0.65, 160], [0.85, 112], [1, 92]]} />
      </g>
      <path d={LEFT_MUG} strokeWidth={2.400} />
      <g clipPath="url(#mug)" stroke="none">
        <rect x="400" y="180" width="540" height="710" fill="#fff" />
        <Facets top={[550, 418, 187]} bottom={[622, 524, 880]} stops={[[0, 255], [0.5, 249], [0.78, 228], [0.92, 194], [1, 160]]} />
        <Facets top={[800, 885, 200]} bottom={[800, 878, 880]} stops={[[0, 255], [0.5, 247], [1, 226]]} />
        <Facets top={[885, 933, 180]} bottom={[878, 911, 880]} stops={[[0, 196], [0.5, 172], [1, 132]]} n={20} />
      </g>
      <path d={RIM} fill="#cfcfcf" stroke="none" />
      <path d={INNER} fill="url(#inner)" />
      <path d="M422 205L444 222L486 237L543 248L605 253H697L768 246L833 235L885 219L917 202L929 186" strokeWidth={1.200} />
      <path d="M460 186L463 200L482 214L516 226L564 235L621 240H695L758 234L808 224L853 212L878 198L892 182" strokeWidth={2.600} />
      <path d="M927 314L931 185L926 167L906 151L874 138L831 128L781 121L732 118H669L613 122L556 129L505 140L465 153L437 168L420 187L422 205L512 792L531 823L566 852L613 871L672 879L731 878L787 867L839 846L878 818L906 784L915 740" strokeWidth={2.600} />
      <path d="M884.500 219V303M879 725V818" />
      <path d="M884 302L1021 335L994 774L879 725L882 400Z" fill="#9dabb5" strokeWidth={1.600} />
      <path d="M884 302L1021 335L994 774L879 725" strokeWidth={2.800} />
      <path d="M884 330L993 358L973 742L879 705" strokeWidth={1.200} />
      <path d="M962 540V556L965.500 553L969 559.500L971.500 558.500L968.500 552H973Z" fill="#000" stroke="#fff" strokeWidth={0.700} />
    </g>
  </Scene>
);

/* ---------- tray parts ---------- */
const colours = ['#fbcfcf', '#f99b9b', '#f56566', '#f33636', '#ee0404', '#cc0003', '#990003', '#660003', '#fddacd', '#f9b297', '#f88e63', '#f56a34', '#f04008', '#d03109', '#982507', '#661b04', '#fee6cf', '#fccf9b'];
const months = 'JFMAMJJASOND'.split('');

const PanelTitle = ({ children }: { children: string }) => (
  <PanelHead><Triangle w={9} h={9} /><h3>{children}</h3><HeadClose aria-label={`${children} 닫기`}><Cross /></HeadClose></PanelHead>
);
const Expand = ({ minus }: { minus?: boolean }) => (
  <svg width={12} height={18} viewBox="0 0 12 18">
    <rect x=".5" y=".5" width="11" height="17" fill="#fff" stroke="#555" />
    {minus
      ? <><rect width="12" height="10" fill="#000" /><path d="M3 5H9" stroke="#fff" strokeWidth={2} /><path d="M2 15.500L6 11L10 15.500Z" /></>
      : <><rect y="8" width="12" height="10" fill="#000" /><path d="M3 13H9M6 10V16" stroke="#fff" strokeWidth={1.600} /><path d="M2 2H10L6 6.500Z" /></>}
  </svg>
);
const Combo = ({ id, name, options, h, underline }: { id: string; name?: string; options: string[]; h: number; underline?: boolean }) => (
  <SelectBox $h={h}>
    <select id={id} aria-label={name}>{options.map(o => <option key={o}>{o}</option>)}</select>
    {underline && <Underline />}
    <SelectArrow><Triangle w={9} h={5} /></SelectArrow>
  </SelectBox>
);
const NavTools = ({ id, value, underline }: { id: string; value: string; underline?: boolean }) => (
  <NavRow>
    <PlainButton aria-label="뒤로"><svg width={15} height={15} viewBox="0 0 15 15" fill="#fff" stroke="#8a8a8a" strokeWidth={1.300}><path d="M1 7.500L7 1V5H14V10H7V14Z" /></svg></PlainButton>
    <PlainButton aria-label="앞으로"><svg width={15} height={15} viewBox="0 0 15 15" fill="#fff" stroke="#8a8a8a" strokeWidth={1.300}><path d="M14 7.500L8 1V5H1V10H8V14Z" /></svg></PlainButton>
    <PlainButton aria-label="모델 내"><svg width={20} height={20} viewBox="0 0 20 20" fill="#fff" stroke="#111" strokeWidth={1.300}><path d="M4 9V18.500H16.500V9" /><path d="M4 8V2H6V6" /><path d="M1 11L10 1.500L19 11" fill="none" /><rect x="8" y="11" width="4.500" height="7.500" fill="#000" /></svg></PlainButton>
    <Combo id={id} name={value} options={[value]} h={26} underline={underline} />
    <PlainButton aria-label="상세정보"><svg width={17} height={17} viewBox="0 0 17 17"><path d="M7 0L16 8.500L7 17Z" /><rect x=".5" y="3.500" width="8" height="11" fill="#fff" stroke="#222" /><rect x="1" y="4" width="7" height="3.500" fill="#4b82c9" /><path d="M2 9.500H7M2 12H7" stroke="#777" /></svg></PlainButton>
  </NavRow>
);
const Bar = ({ end = true, wide }: { end?: boolean; wide?: boolean }) => (
  <ScrollBar $wide={wide}>
    <ScrollButton aria-label="위로"><Chevron /></ScrollButton>
    <Thumb />
    {end && <ScrollButton aria-label="아래로"><Chevron down /></ScrollButton>}
  </ScrollBar>
);
const Folder = () => (
  <svg width={36} height={36} viewBox="0 0 36 36"><path d="M1 4L9 2L12 5L31 2L28 34H6Z" fill="#8cbbd8" stroke="#4c6674" /><path d="M6 7L35 1L31 34H8Z" fill="#b4946c" stroke="#555" /></svg>
);

export default function App() {
  return (
    <Page>
      <GlobalStyle />
      <MenuBar aria-label="메뉴">
        {['파일(F)', '편집(E)', '보기(V)', '카메라(C)', '그리기(R)', '도구(T)', '창(W)', '도움말(H)'].map(m => <MenuItem key={m}>{m}</MenuItem>)}
      </MenuBar>
      <ToolBar role="toolbar">
        <ToolGroup>
          <Grip />
          <Tool name="cursor" label="선택" active /><VSep />
          <Tool name="eraser" label="지우개" />
          <WithMenu name="pencil" label="선" /><WithMenu name="arc2" label="호" /><WithMenu name="rect" label="직사각형" /><VSep />
          <Tool name="push" label="밀기/끌기" /><Tool name="offset" label="오프셋" /><Tool name="move" label="이동" /><Tool name="rotate" label="회전" /><Tool name="scale" label="배율" /><VSep />
          <Tool name="tape" label="줄자" /><Tool name="label" label="텍스트" /><Tool name="bucket" label="페인트통" /><VSep />
          <Tool name="orbit" label="궤도" /><Tool name="hand" label="이동 보기" /><Tool name="zoom" label="확대/축소" /><Tool name="extents" label="범위 확대" /><VSep />
          <Tool name="warehouse" label="3D Warehouse" /><Tool name="extWarehouse" label="Extension Warehouse" /><Tool name="layout" label="LayOut" /><VSep />
          <Tool name="ruby" label="확장 관리자" />
        </ToolGroup>
        <ToolGroup>
          <Grip />
          <Tool name="iso" label="등각" /><Tool name="top" label="상단" /><Tool name="front" label="정면" /><Tool name="right" label="우측" /><Tool name="back" label="후면" /><Tool name="left" label="좌측" />
        </ToolGroup>
        <ToolGroup>
          <Grip />
          <Tool name="shell" label="외부 셸" /><VSep />
          <Tool name="intersect" label="교차" /><Tool name="union" label="결합" /><Tool name="subtract" label="빼기" /><Tool name="trim" label="트림" /><Tool name="split" label="분할" />
        </ToolGroup>
        <ToolGroup>
          <Grip />
          <Tool name="shadow" label="그림자" />
          <Sun>
            <SunField>
              <Range type="range" min={0} max={100} defaultValue={86} aria-label="날짜" $track="#fdf8ea, #f0dc8a 18%, #f0b21e 34%, #ee6a1c 48%, #e80f0f 66%, #ee4a4a 78%, #f5b5bb 88%, #fdf0f0" />
              <Ticks $inset={3}>{months.map((m, i) => <span key={i}>{m}</span>)}</Ticks>
            </SunField>
            <SunField>
              <Range type="range" min={0} max={100} defaultValue={63} aria-label="시간" $track="#f6fbfd, #a9c8e0 28%, #7f9fe0 46%, #6a7df0 62%, #5a66e0 72%, #1d2266 88%, #050510" />
              <Ticks $inset={0}><span>07:08</span><span>정오</span><span>17:22</span></Ticks>
            </SunField>
          </Sun>
        </ToolGroup>
      </ToolBar>

      <Body>
        <Side>
          <SideTools role="toolbar">
            <SideGrip />
            <Tool name="cursor" label="선택" active /><Tool name="component" label="구성요소" />
            <Tool name="bucket" label="페인트통" /><Tool name="eraser" label="지우개" />
            <HSep />
            <Tool name="pencil" label="선" /><Tool name="freehand" label="자유곡선" />
            <Tool name="rect" label="직사각형" /><Tool name="rotRect" label="회전 직사각형" />
            <Tool name="circle" label="원" /><Tool name="polygon" label="다각형" />
            <Tool name="arc1" label="호" /><Tool name="arc2" label="2점 호" />
            <Tool name="arc3" label="3점 호" /><Tool name="pie" label="원형" />
            <HSep />
            <Tool name="move" label="이동" /><Tool name="push" label="밀기/끌기" />
            <Tool name="rotate" label="회전" /><Tool name="follow" label="따라가기" />
            <Tool name="scale" label="배율" /><Tool name="offset" label="오프셋" />
            <HSep />
            <Tool name="tape" label="줄자" /><Tool name="dimension" label="치수" />
            <Tool name="protractor" label="각도기" /><Tool name="label" label="텍스트" />
            <Tool name="axes" label="축" /><Tool name="text3d" label="3D 텍스트" />
            <HSep />
            <Tool name="orbit" label="궤도" /><Tool name="hand" label="이동 보기" />
            <Tool name="zoom" label="확대/축소" /><Tool name="zoomWin" label="창 확대" />
            <Tool name="extents" label="범위 확대" /><Tool name="previous" label="이전" />
            <HSep />
            <Tool name="position" label="카메라 배치" /><Tool name="look" label="둘러보기" />
            <Tool name="walk" label="이동 시점" /><Tool name="section" label="단면" />
          </SideTools>
        </Side>

        <Viewport>
          <Model />
          <KeyList><Key>&lt;LButtonDown&gt;</Key><Key>&lt;LButtonUp&gt;</Key><Key>&lt;Space&gt;</Key></KeyList>
        </Viewport>

        <Tray>
          <TrayTitle>
            <h2>기본 트레이</h2>
            <TitleButton aria-label="고정"><svg width={9} height={11} viewBox="0 0 9 11" fill="none" stroke="#111"><path d="M2 0.500H7V6.500H2Z M0 6.500H9M4.500 7V11" /><path d="M6 1V6" strokeWidth={1.500} /></svg></TitleButton>
            <TitleButton $close aria-label="닫기"><Cross c="#fff" /></TitleButton>
          </TrayTitle>
          <TrayBody>
            <Panels>
              <PanelTitle>요소 정보</PanelTitle>
              <EntityInfo>
                <EntityHead><span>가장자리</span><PlainButton aria-label="세부 정보"><Expand /></PlainButton></EntityHead>
                <Rule $right={20} />
                <EntityGrid>
                  <Swatch $w={53} $h={60} />
                  <label htmlFor="layer">레이어(<u>L</u>):</label>
                  <LayerSelect><Combo id="layer" options={['Layer0']} h={24} /></LayerSelect>
                  <label htmlFor="length">길이:</label>
                  <ReadOnly id="length" readOnly value="~ 446mm" />
                </EntityGrid>
                <Checks>
                  <Check><input type="checkbox" />부드럽게</Check>
                  <Check><input type="checkbox" />매끄럽게</Check>
                </Checks>
              </EntityInfo>
              <PanelTitle>재질</PanelTitle>
              <Material>
                <Swatch $w={77} $h={87} />
                <MaterialName><ReadOnly $dim readOnly aria-label="재질 이름" value="기본값" /></MaterialName>
                <MaterialTools>
                  <PlainButton aria-label="보조 창"><Expand minus /></PlainButton>
                  <PlainButton aria-label="재질 만들기">
                    <svg width={24} height={24} viewBox="0 2 24 24"><path d="M3 9L12 4L21 7V18L11 25L4 20Z" fill="#2b2a20" stroke="#000" /><path d="M5 9L12 5.500L19 8L11 12Z" fill="#d8d3a8" /><path d="M8 7.500L15 10M10 14L20 10M10 18L20 14" stroke="#77745c" strokeWidth={1.500} /><circle cx="7.500" cy="19.500" r="5.500" fill="#fff" stroke="#000" strokeWidth={1.300} /><path d="M4 19.500H11M7.500 16V23" stroke="#000" strokeWidth={1.300} /></svg>
                  </PlainButton>
                  <MiniSwatch />
                </MaterialTools>
              </Material>
              <Rule />
              <TabRow role="tablist">
                <Tab $on role="tab" aria-selected>선택</Tab><Tab role="tab">편집</Tab>
                <TabTool><PlainButton aria-label="스포이드"><svg width={22} height={22} viewBox="0 0 22 22"><path d="M2 20L4 15L12 7L15 10L7 18Z" fill="#e3c878" stroke="#4b4b4b" /><path d="M9 10L13 6L16 9L12 13Z" fill="#ddd" stroke="#555" /><path d="M10 6L16 12M13 8L18 3" stroke="#333" strokeWidth={3} /><circle cx="18" cy="4" r="3" fill="#444" /></svg></PlainButton></TabTool>
              </TabRow>
              <NavTools id="colour-set" value="색상" />
              <Rule />
              <List $grow>
                <Cells>{colours.map(c => <Colour key={c} $c={c} aria-label={c} />)}</Cells>
                <Bar />
              </List>
              <SecondHead><span>선택</span></SecondHead>
              <NavTools id="material-set" value="재질" underline />
              <Rule />
              <List>
                <Cells>{[0, 1, 2].map(i => <FolderCell key={i} aria-label="재질 폴더"><Folder /></FolderCell>)}</Cells>
                <Bar end={false} />
              </List>
            </Panels>
            <Bar wide />
          </TrayBody>
        </Tray>
      </Body>

      <Status>
        <PlainButton aria-label="위치"><svg width={20} height={20} viewBox="0 0 20 20"><circle cx="10" cy="10" r="8.500" fill="none" stroke="#9b9b9b" strokeWidth={1.300} /><path d="M10 16L7 9Q6 4.500 10 4Q14 4.500 13 9Z" fill="#9b9b9b" /></svg></PlainButton>
        <PlainButton aria-label="정보"><svg width={20} height={20} viewBox="0 0 20 20"><circle cx="10" cy="10" r="8.500" fill="none" stroke="#111" strokeWidth={1.600} /><circle cx="10" cy="5.500" r="1.600" /><path d="M7.500 8H12V11L11.500 16H8.500V11H7.500Z" /></svg></PlainButton>
        <PlainButton aria-label="로그인"><svg width={20} height={20} viewBox="0 0 20 20"><circle cx="10" cy="10" r="8.500" fill="none" stroke="#9b9b9b" strokeWidth={1.300} /><circle cx="10" cy="7.500" r="3.500" fill="#9b9b9b" /><path d="M4 15Q6 11.500 10 12Q14 11.500 16 15Q10 20 4 15Z" fill="#9b9b9b" /></svg></PlainButton>
        <StatusTick />
        <Measure><StatusTick />단위<input aria-label="단위" /></Measure>
      </Status>
      <Shade />
    </Page>
  );
}
